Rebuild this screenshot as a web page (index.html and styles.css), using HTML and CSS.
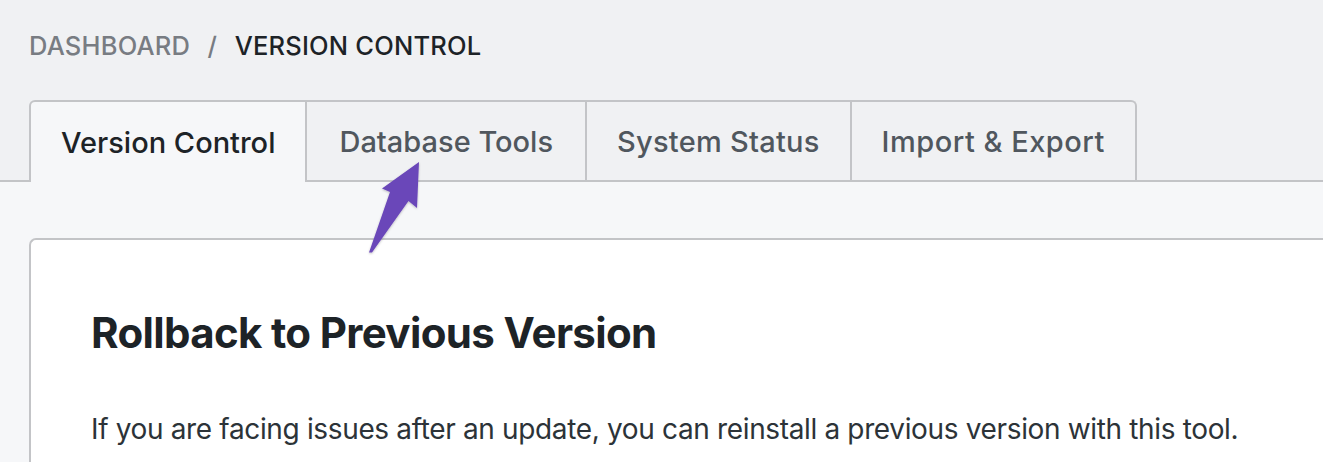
FILE: index.html
```html
<!DOCTYPE html>
<html lang="en">
<head>
<meta charset="utf-8">
<title>Version Control</title>
<link rel="stylesheet" href="styles.css">
</head>
<body>
<div class="page">
  <nav class="breadcrumb">
    <span class="crumb">DASHBOARD</span>
    <span class="sep">/</span>
    <span class="crumb current">VERSION CONTROL</span>
  </nav>
  <div class="tabs">
    <div class="tab active">Version Control</div>
    <div class="tab">Database Tools</div>
    <div class="tab">System Status</div>
    <div class="tab">Import &amp; Export</div>
  </div>
  <div class="panel">
    <div class="card">
      <h2 class="card-title">Rollback to Previous Version</h2>
      <p class="card-text">If you are facing issues after an update, you can reinstall a previous version with this tool.</p>
    </div>
  </div>
  <svg class="pointer" width="60" height="100" viewBox="360 155 60 100" aria-hidden="true">
    <defs>
      <filter id="sh" x="-30%" y="-30%" width="160%" height="160%">
        <feDropShadow dx="0" dy="1" stdDeviation="1.2" flood-color="#000" flood-opacity="0.25"/>
      </filter>
    </defs>
    <polygon filter="url(#sh)" fill="#6b47b9" points="419,162 417,208 408.5,201 372,252.5 369,252.5 390,192 382,188.5"/>
  </svg>
</div>
</body>
</html>
```

FILE: styles.css
```css
html, body {
  margin: 0;
  padding: 0;
}

body {
  background: #f0f1f3;
  font-family: Inter, "Noto Sans", "Liberation Sans", sans-serif;
  color: #1d2327;
  overflow: hidden;
}

.page {
  position: relative;
  min-height: 462px;
}

.breadcrumb {
  display: flex;
  align-items: baseline;
  gap: 17.5px;
  padding: 30px 0 0 29px;
  height: 100px;
  box-sizing: border-box;
  font-size: 25.5px;
  line-height: 32px;
  font-weight: 500;
  letter-spacing: 0.2px;
}

.crumb {
  color: #787c82;
}

.crumb.current {
  color: #1d2327;
}

.sep {
  color: #787c82;
}

.tabs {
  display: flex;
  align-items: flex-end;
  padding-left: 29px;
  border-bottom: 2px solid #c3c4c7;
  height: 80px;
}

.tab {
  height: 78px;
  display: flex;
  align-items: center;
  padding: 0 30px;
  border-top: 2px solid #c3c4c7;
  border-right: 2px solid #c3c4c7;
  background: #f0f1f3;
  color: #50575e;
  font-size: 29px;
  font-weight: 500;
  white-space: nowrap;
}

.tab:first-child {
  border-left: 2px solid #c3c4c7;
  border-top-left-radius: 6px;
}

.tab:nth-child(2) {
  padding: 0 32px 0 32px;
}

.tab:nth-child(3) {
  letter-spacing: 0.25px;
}

.tab:last-child {
  border-top-right-radius: 6px;
  letter-spacing: 0.5px;
}

.tab.active {
  background: #f6f7f9;
  color: #1d2327;
  height: 80px;
  margin-bottom: -2px;
}

.panel {
  background: #f6f7f9;
  padding: 56px 0 0 29px;
  height: 300px;
}

.card {
  background: #ffffff;
  border-top: 2px solid #c3c4c7;
  border-left: 2px solid #c3c4c7;
  border-top-left-radius: 7px;
  padding: 67px 0 0 60px;
  height: 400px;
}

.card-title {
  margin: 0;
  font-size: 42px;
  line-height: 52px;
  font-weight: 700;
  color: #1d2327;
  letter-spacing: -0.65px;
}

.card-text {
  margin: 52px 0 0;
  font-size: 28px;
  line-height: 36px;
  color: #2c3338;
  font-weight: 400;
  letter-spacing: -0.35px;
}

.pointer {
  position: absolute;
  left: 360px;
  top: 155px;
  overflow: visible;
}
```
